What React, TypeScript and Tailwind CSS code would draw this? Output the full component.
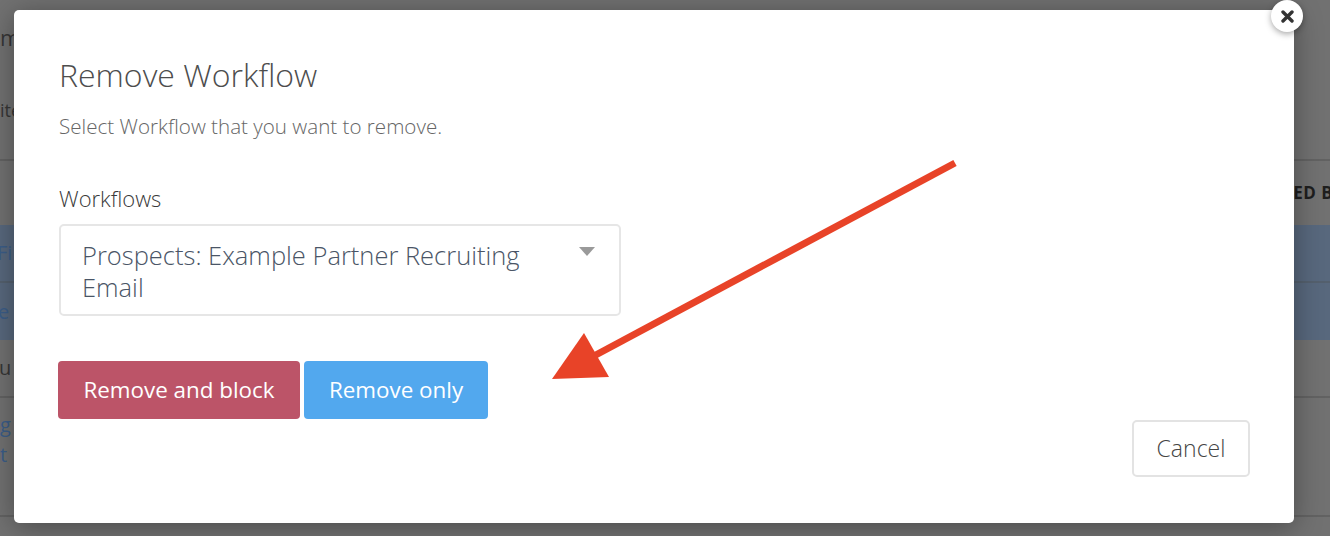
const font = { fontFamily: '"Open Sans", "Noto Sans", sans-serif' };

function BackdropPage() {
  return (
    <div className="flex h-full flex-col bg-[#717171] text-[#363636]">
      <div className="flex h-[161px] flex-col border-b-2 border-[#626262] pt-[22px]">
        <span className="text-[22px] leading-[30px]">m</span>
        <span className="mt-[46px] text-[18px] leading-[24px]">ite</span>
      </div>
      <div className="flex h-[64px] items-center justify-end">
        <span className="mr-[-3px] whitespace-nowrap text-[17px] font-bold tracking-wide text-[#1e1e1e]">ED B</span>
      </div>
      <div className="flex h-[58px] items-center border-b-2 border-[#54606e] bg-[#58687d] text-[20px] text-[#3b5d88]">
        <span className="ml-[-3px]">Fi</span>
      </div>
      <div className="flex h-[57px] items-center bg-[#58687d] text-[20px] text-[#3b5d88]">
        <span className="ml-[-2px]">e (</span>
      </div>
      <div className="flex h-[58px] items-center border-b-2 border-[#626262] text-[20px]">
        <span className="ml-[-1px]">u</span>
      </div>
      <div className="flex h-[119px] flex-col border-b-2 border-[#626262] pt-[12px] text-[20px] leading-[30px] text-[#3b5d88]">
        <span>g</span>
        <span>t</span>
      </div>
      <div className="flex-1" />
    </div>
  );
}

function Arrow() {
  return (
    <svg className="pointer-events-none absolute inset-0" width="1330" height="536" viewBox="0 0 1330 536">
      <line x1="955" y1="163" x2="592" y2="357" stroke="#e84328" strokeWidth="7" />
      <polygon points="552,379 584,333 609,377" fill="#e84328" />
    </svg>
  );
}

function CloseButton() {
  return (
    <button className="absolute right-[-9px] top-[-10px] flex h-[32px] w-[32px] items-center justify-center rounded-full bg-white shadow-[0_2px_6px_rgba(0,0,0,0.35)]">
      <svg width="13" height="13" viewBox="0 0 13 13">
        <path d="M2 2 L11 11 M11 2 L2 11" stroke="#333" strokeWidth="3.4" strokeLinecap="round" />
      </svg>
    </button>
  );
}

export default function App() {
  return (
    <div className="relative h-[536px] w-[1330px] overflow-hidden" style={font}>
      <BackdropPage />

      <div className="absolute left-[14px] top-[10px] flex h-[513px] w-[1280px] flex-col items-start rounded-[5px] bg-white px-[45px] pt-[46px] shadow-[0_4px_28px_rgba(0,0,0,0.35)]">
        <CloseButton />

        <h2 className="text-[32px] font-light leading-[38px] text-[#4d4d4d]">Remove Workflow</h2>
        <p className="mt-[19px] text-[20.6px] font-light leading-[26px] text-[#666]">
          Select Workflow that you want to remove.
        </p>

        <label className="mt-[45px] block text-[22px] font-light leading-[28px] text-[#3a3a3a]">Workflows</label>
        <div className="relative mt-[12px] h-[92px] w-[562px] rounded-[5px] border-2 border-[#e6e6e6] pl-[21px] pr-[70px] pt-[13px]">
          <p className="text-[25.5px] font-light leading-[32px] text-[#4a5566]">
            Prospects: Example Partner Recruiting Email
          </p>
          <svg className="absolute right-[24px] top-[21px]" width="16" height="9" viewBox="0 0 16 9">
            <polygon points="0,0 16,0 8,9" fill="#9a9a9a" />
          </svg>
        </div>

        <div className="ml-[-1px] mt-[45px] flex gap-[4px]">
          <button className="h-[58px] w-[242px] rounded-[4px] bg-[#bc5468] text-[22.4px] text-white">
            Remove and block
          </button>
          <button className="h-[58px] w-[184px] rounded-[4px] bg-[#52a8ee] text-[22.4px] text-white">
            Remove only
          </button>
        </div>

        <button className="mr-[-1px] mt-[1px] h-[57px] w-[118px] self-end rounded-[5px] border-2 border-[#e3e3e3] bg-white text-[23px] font-light text-[#454545]">
          Cancel
        </button>
      </div>

      <Arrow />
    </div>
  );
}
